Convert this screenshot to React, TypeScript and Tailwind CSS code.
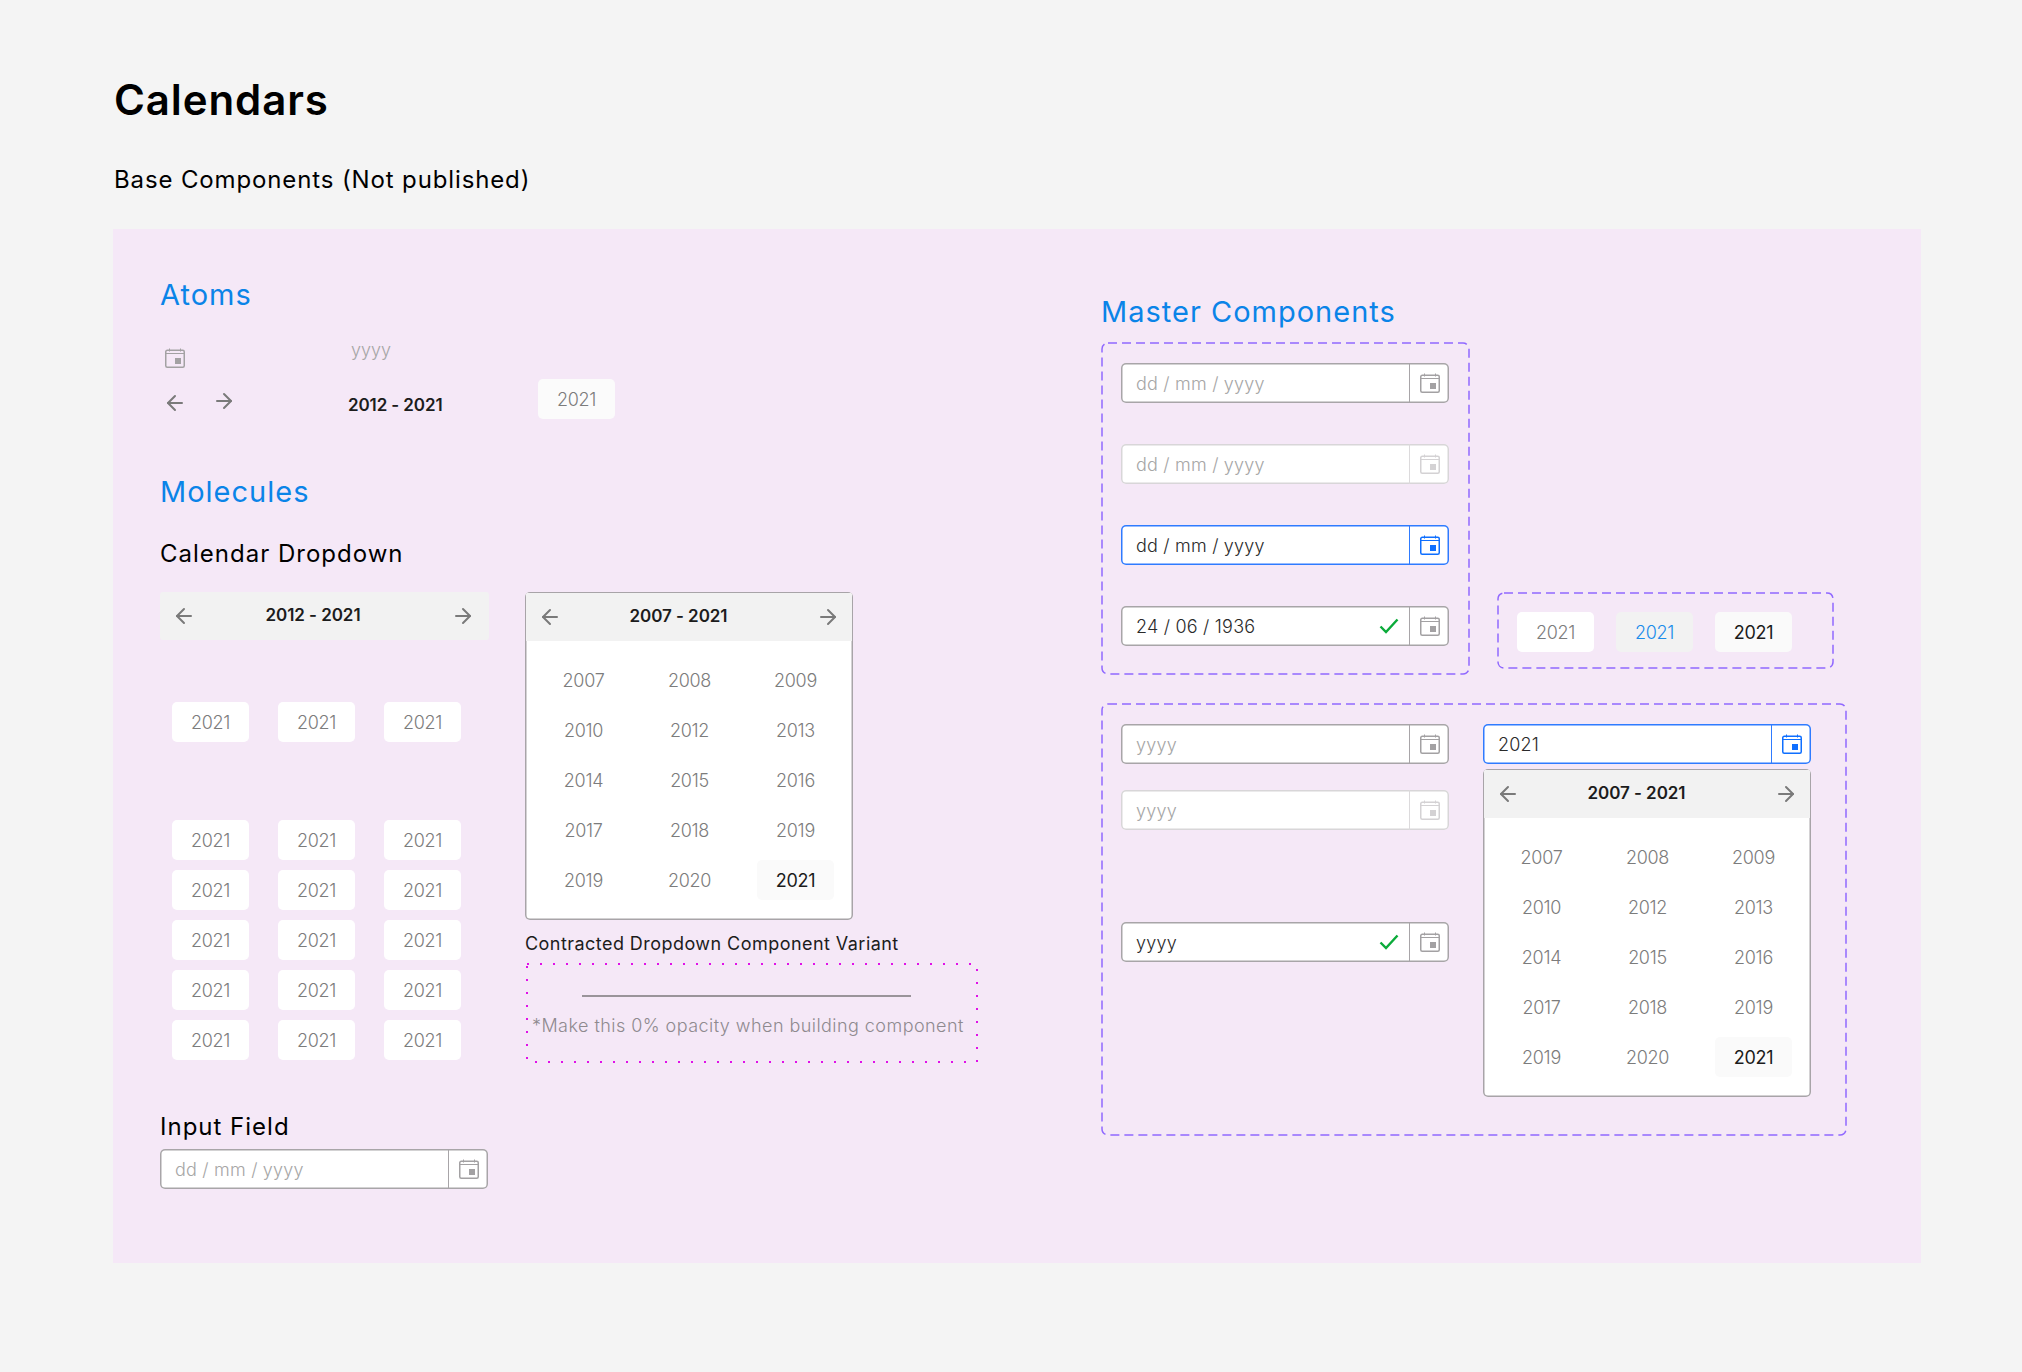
import React from 'react';
import { ArrowLeft, ArrowRight } from 'lucide-react';

type FieldState = 'default' | 'disabled' | 'active' | 'filled';

const CalendarIcon = ({ className = '' }: { className?: string }) => (
    <svg width="20" height="20" viewBox="0 0 20 20" fill="none" stroke="currentColor" className={className}>
        <rect x="0.75" y="2.25" width="18.5" height="17" rx="1.5" strokeWidth="1.5" />
        <path d="M1 5.5H19" strokeWidth="1" />
        <path d="M4.5 0.5V3.5M15.5 0.5V3.5" strokeWidth="1" />
        <rect x="10" y="10" width="6" height="6" fill="currentColor" stroke="none" />
    </svg>
);

const CheckIcon = () => (
    <svg width="20" height="18" viewBox="0 0 20 18" fill="none" stroke="#0bab3a" strokeWidth="2.4">
        <path d="M1.5 9.5L7 15L18.5 2.5" />
    </svg>
);

// dashed outlines in the picture have a longer gap than css borders can give
const Outline = ({ color, dash, radius, width }: { color: string; dash: string; radius: number; width: number }) => (
    <svg className="absolute inset-0 w-full h-full pointer-events-none" fill="none">
        <rect x="1" y="1" width="calc(100% - 2px)" height="calc(100% - 2px)" rx={radius} stroke={color} strokeWidth={width} strokeDasharray={dash} />
    </svg>
);

const Chip = ({ className = 'bg-white text-[#7c7c7c] font-light' }: { className?: string }) => (
    <div className={`w-[77px] h-[40px] rounded-[5px] flex items-center justify-center text-[18px] tracking-[-0.3px] ${className}`}>2021</div>
);

const ChipRows = ({ rows }: { rows: number }) => (
    <div className="grid grid-cols-[77px_77px_77px] gap-x-[29px] gap-y-[10px]">
        {Array.from({ length: rows * 3 }).map((_, i) => (
            <Chip key={i} />
        ))}
    </div>
);

const HeaderBar = ({ label, className = '' }: { label: string; className?: string }) => (
    <div className={`h-[48px] bg-[#f2f2f2] flex items-center justify-between pl-[12px] text-[#7a7a7a] ${className}`}>
        <ArrowLeft size={24} />
        <span className="text-[17px] font-semibold text-[#1c1c1c] tracking-[-0.05px] mr-[21px]">{label}</span>
        <ArrowRight size={24} />
    </div>
);

const YEARS = ['2007', '2008', '2009', '2010', '2012', '2013', '2014', '2015', '2016', '2017', '2018', '2019', '2019', '2020', '2021'];

const Dropdown = () => (
    <div className="w-[328px] h-[328px] bg-white rounded-[5px] ring-[1.5px] ring-inset ring-[#a8a4a8] overflow-hidden">
        <HeaderBar label="2007 - 2021" className="m-[1px] mb-0 pr-[12px]" />
        <div className="grid grid-cols-[77px_77px_77px] gap-x-[29px] gap-y-[10px] px-[20px] pt-[19px]">
            {YEARS.map((year, i) => (
                <div key={i} className={`h-[40px] rounded-[5px] flex items-center justify-center text-[18px] tracking-[-0.3px] ${i === 14 ? 'bg-[#fafafa] text-[#1c1c1c]' : 'text-[#7c7c7c] font-light'}`}>
                    {year}
                </div>
            ))}
        </div>
    </div>
);

const Field = ({ state = 'default', text, check = false }: { state?: FieldState; text: string; check?: boolean }) => {
    const ring = state === 'active' ? 'ring-[#2f7bff]' : state === 'disabled' ? 'ring-[#d8d6d8]' : 'ring-[#a8a5a8]';
    const line = state === 'active' ? 'bg-[#2f7bff]' : state === 'disabled' ? 'bg-[#dcdadc]' : 'bg-[#a8a5a8]';
    const icon = state === 'active' ? 'text-[#0f6fff]' : state === 'disabled' ? 'text-[#d4d2d4]' : 'text-[#a3a1a3]';
    const label = state === 'active' || state === 'filled' ? 'text-[#2a2a2a]' : 'text-[#a6a6a6]';
    return (
        <div className={`w-[328px] h-[40px] bg-white rounded-[5px] ring-[1.5px] ring-inset ${ring} flex items-center shrink-0`}>
            <span className={`flex-1 pl-[15px] text-[18px] font-light tracking-[0.2px] ${label}`}>{text}</span>
            {check && (
                <span className="mr-[10px]">
                    <CheckIcon />
                </span>
            )}
            <div className={`w-[1.5px] h-full ${line}`} />
            <div className="w-[39px] flex items-center justify-center">
                <CalendarIcon className={icon} />
            </div>
        </div>
    );
};

const Heading = ({ children }: { children: React.ReactNode }) => (
    <h2 className="h-[36px] leading-[36px] text-[29px] tracking-[1px] text-[#0a84e8]">{children}</h2>
);

const SubHeading = ({ children }: { children: React.ReactNode }) => (
    <h3 className="h-[30px] leading-[30px] text-[24px] tracking-[1px] text-black">{children}</h3>
);

const Atoms = () => (
    <div className="flex h-[75px] mt-[32px]">
        <div className="w-[188px]">
            <CalendarIcon className="ml-[5px] mt-[3px] text-[#a3a1a3]" />
            <div className="flex items-start ml-[3px] mt-[23px] gap-[25px] text-[#7a7a7a]">
                <ArrowLeft size={24} />
                <ArrowRight size={24} className="-mt-[2px]" />
            </div>
        </div>
        <div className="w-[190px]">
            <div className="ml-[3px] h-[24px] leading-[24px] text-[18px] font-light text-[#a6a6a6] -mt-[7px]">yyyy</div>
            <div className="mt-[31px] h-[24px] leading-[24px] text-[17px] font-semibold text-[#1c1c1c] tracking-[-0.1px]">2012 - 2021</div>
        </div>
        <div className="mt-[34px]">
            <Chip className="bg-[#fbfbfb] text-[#7c7c7c] font-light" />
        </div>
    </div>
);

export default function App() {
    return (
        <div className="min-h-[1372px] bg-[#f4f4f4] font-['Inter',sans-serif] pl-[113px] pt-[74px] overflow-hidden">
            <h1 className="h-[52px] leading-[52px] text-[42px] font-semibold text-black tracking-[0.9px] pl-[1px]">Calendars</h1>
            <p className="mt-[38px] h-[32px] leading-[32px] text-[24px] text-black tracking-[0.87px] pl-[1px]">Base Components (Not published)</p>
            <div className="mt-[33px] w-[1808px] h-[1034px] bg-[#f5e8f7] flex">
                {/* left column */}
                <div className="w-[988px] pl-[47px] pt-[48px]">
                    <Heading>Atoms</Heading>
                    <Atoms />
                    <div className="mt-[54px]">
                        <Heading>Molecules</Heading>
                    </div>
                    <div className="mt-[29px]">
                        <SubHeading>Calendar Dropdown</SubHeading>
                    </div>
                    <div className="flex gap-[36px] mt-[23px] h-[470px]">
                        <div className="w-[329px]">
                            <HeaderBar label="2012 - 2021" className="rounded-[3px] pr-[14px]" />
                            <div className="pl-[12px] mt-[62px]">
                                <ChipRows rows={1} />
                            </div>
                            <div className="pl-[12px] mt-[78px]">
                                <ChipRows rows={5} />
                            </div>
                        </div>
                        <div>
                            <Dropdown />
                            <p className="mt-[12px] h-[24px] leading-[24px] text-[18px] text-[#1c1c1c] tracking-[0.45px] whitespace-nowrap">Contracted Dropdown Component Variant</p>
                            <div className="relative mt-[7px] ml-[1px] w-[452px] h-[100px] pt-[32px]">
                                <Outline color="#e010e8" dash="2 11" radius={0} width={2} />
                                <div className="ml-[56px] w-[329px] h-[1.5px] bg-[#9a949a]" />
                                <p className="ml-[6px] mt-[17px] h-[24px] leading-[24px] text-[18px] font-light text-[#8f8a8f] tracking-[0.45px] whitespace-nowrap">*Make this 0% opacity when building component</p>
                            </div>
                        </div>
                    </div>
                    <div className="mt-[50px]">
                        <SubHeading>Input Field</SubHeading>
                    </div>
                    <div className="mt-[7px]">
                        <Field text="dd / mm / yyyy" />
                    </div>
                </div>
                {/* right column */}
                <div className="pt-[65px]">
                    <Heading>Master Components</Heading>
                    <div className="flex gap-[27px] mt-[12px]">
                        <div className="relative w-[369px] h-[333px] pt-[21px] pl-[20px] flex flex-col gap-[41px]">
                            <Outline color="#9068ff" dash="9 5" radius={6} width={1.5} />
                            <Field text="dd / mm / yyyy" />
                            <Field state="disabled" text="dd / mm / yyyy" />
                            <Field state="active" text="dd / mm / yyyy" />
                            <Field state="filled" text="24 / 06 / 1936" check />
                        </div>
                        <div className="relative w-[337px] h-[77px] mt-[250px] pt-[20px] pl-[20px] flex gap-[22px]">
                            <Outline color="#9068ff" dash="9 5" radius={6} width={1.5} />
                            <Chip />
                            <Chip className="bg-[#f2f2f2] text-[#1a8ceb] font-light" />
                            <Chip className="bg-[#fafafa] text-[#1c1c1c]" />
                        </div>
                    </div>
                    <div className="relative w-[746px] h-[433px] mt-[28px] pt-[21px] pl-[20px] flex gap-[34px]">
                        <Outline color="#9068ff" dash="9 5" radius={6} width={1.5} />
                        <div className="flex flex-col">
                            <Field text="yyyy" />
                            <div className="mt-[26px]">
                                <Field state="disabled" text="yyyy" />
                            </div>
                            <div className="mt-[92px]">
                                <Field state="filled" text="yyyy" check />
                            </div>
                        </div>
                        <div className="flex flex-col gap-[5px]">
                            <Field state="active" text="2021" />
                            <Dropdown />
                        </div>
                    </div>
                </div>
            </div>
        </div>
    );
}
